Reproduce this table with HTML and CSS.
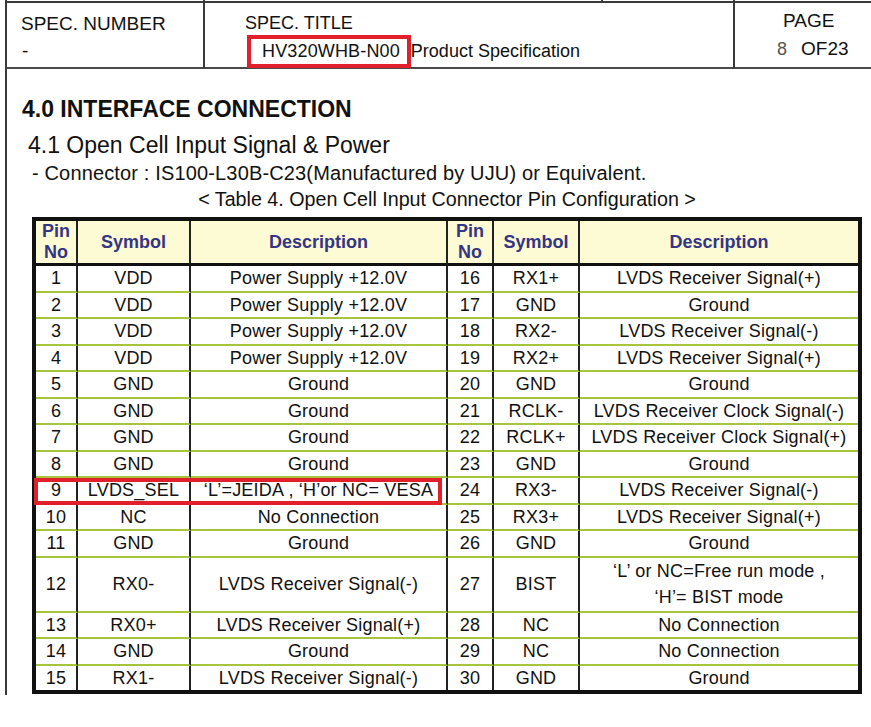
FILE: index.html
```html
<!DOCTYPE html>
<html>
<head>
<meta charset="utf-8">
<link rel="stylesheet" href="styles.css">
</head>
<body>
<div class="page">
  <div class="strip"><span></span><span></span><span></span><span></span></div>
  <header class="hdr">
    <div class="hc hc-num">
      <div class="num-lbl">SPEC. NUMBER</div>
      <div class="num-val">-</div>
    </div>
    <div class="hc hc-title">
      <div class="title-lbl">SPEC. TITLE</div>
      <div class="title-val"><span class="mark">HV320WHB-N00</span>Product Specification</div>
    </div>
    <div class="hc hc-page">
      <div class="page-lbl">PAGE</div>
      <div class="page-val"><span class="pno">8</span><span class="pof">OF23</span></div>
    </div>
  </header>
  <main class="content">
    <h1>4.0 INTERFACE CONNECTION</h1>
    <h2>4.1 Open Cell Input Signal &amp; Power</h2>
    <p class="conn">- Connector : IS100-L30B-C23(Manufactured by UJU) or Equivalent.</p>
    <p class="cap">&lt; Table 4. Open Cell Input Connector Pin Configuration &gt;</p>
    <div class="tblwrap">
      <table class="pins">
        <colgroup>
          <col class="c-pin1"><col class="c-sym1"><col class="c-desc1">
          <col class="c-pin2"><col class="c-sym2"><col class="c-desc2">
        </colgroup>
        <thead>
          <tr><th>Pin<br>No</th><th>Symbol</th><th>Description</th><th>Pin<br>No</th><th>Symbol</th><th>Description</th></tr>
        </thead>
        <tbody>
          <tr><td>1</td><td>VDD</td><td>Power Supply +12.0V</td><td>16</td><td>RX1+</td><td>LVDS Receiver Signal(+)</td></tr>
          <tr><td>2</td><td>VDD</td><td>Power Supply +12.0V</td><td>17</td><td>GND</td><td>Ground</td></tr>
          <tr><td>3</td><td>VDD</td><td>Power Supply +12.0V</td><td>18</td><td>RX2-</td><td>LVDS Receiver Signal(-)</td></tr>
          <tr><td>4</td><td>VDD</td><td>Power Supply +12.0V</td><td>19</td><td>RX2+</td><td>LVDS Receiver Signal(+)</td></tr>
          <tr><td>5</td><td>GND</td><td>Ground</td><td>20</td><td>GND</td><td>Ground</td></tr>
          <tr><td>6</td><td>GND</td><td>Ground</td><td>21</td><td>RCLK-</td><td>LVDS Receiver Clock Signal(-)</td></tr>
          <tr><td>7</td><td>GND</td><td>Ground</td><td>22</td><td>RCLK+</td><td>LVDS Receiver Clock Signal(+)</td></tr>
          <tr><td>8</td><td>GND</td><td>Ground</td><td>23</td><td>GND</td><td>Ground</td></tr>
          <tr><td>9</td><td>LVDS_SEL</td><td>‘L’=JEIDA , ‘H’or NC= VESA</td><td>24</td><td>RX3-</td><td>LVDS Receiver Signal(-)</td></tr>
          <tr><td>10</td><td>NC</td><td>No Connection</td><td>25</td><td>RX3+</td><td>LVDS Receiver Signal(+)</td></tr>
          <tr><td>11</td><td>GND</td><td>Ground</td><td>26</td><td>GND</td><td>Ground</td></tr>
          <tr class="dbl"><td>12</td><td>RX0-</td><td>LVDS Receiver Signal(-)</td><td>27</td><td>BIST</td><td class="two">‘L’ or NC=Free run mode ,<br>‘H’= BIST mode</td></tr>
          <tr><td>13</td><td>RX0+</td><td>LVDS Receiver Signal(+)</td><td>28</td><td>NC</td><td>No Connection</td></tr>
          <tr><td>14</td><td>GND</td><td>Ground</td><td>29</td><td>NC</td><td>No Connection</td></tr>
          <tr><td>15</td><td>RX1-</td><td>LVDS Receiver Signal(-)</td><td>30</td><td>GND</td><td>Ground</td></tr>
        </tbody>
      </table>
      <div class="rowmark"></div>
    </div>
  </main>
</div>
</body>
</html>
```
FILE: styles.css
```css
* { box-sizing: border-box; }
html, body { margin: 0; padding: 0; background: #fff; }
body {
  font-family: "Liberation Sans", Arial, sans-serif;
  color: #111;
  width: 871px;
  height: 727px;
  overflow: hidden;
}
.page {
  margin-left: 5px;
  border-left: 2px solid #3a3a3a;
  height: 695px;
}
.strip {
  display: grid;
  grid-template-columns: 198px 398px 132px 1fr;
  height: 1px;
}
.strip span { border-right: 2px solid #3a3a3a; }
.strip span:last-child { border-right: 0; }

.hdr {
  display: grid;
  grid-template-columns: 198px 530px 1fr;
  height: 68px;
  border-top: 2px solid #3a3a3a;
  border-bottom: 2px solid #4a4a4a;
}
.hc { border-right: 2px solid #3a3a3a; }
.hc-page { border-right: 0; }

.hc-num { padding: 9px 0 0 14px; }
.num-lbl, .num-val { font-size: 19px; line-height: 24px; }
.num-val { margin-top: 3px; padding-left: 1px; }

.hc-title { padding: 10px 0 0 40px; }
.title-lbl { font-size: 18px; line-height: 20px; }
.title-val { margin-top: 2px; padding-left: 2px; font-size: 18px; line-height: 18px; white-space: nowrap; }
.mark {
  display: inline-block;
  border: 4px solid #e2202b;
  line-height: 25px;
  padding: 0 7px 0 11px;
  letter-spacing: 0.15px;
}

.hc-page { padding: 7px 0 0 48px; }
.page-lbl { font-size: 19px; line-height: 22px; }
.page-val { margin: 6px 0 0 -6px; font-size: 19px; line-height: 22px; white-space: nowrap; }
.pno { font-size: 18px; color: #555; }
.pof { margin-left: 14px; }

.content { padding: 26px 0 0 15px; }
.content h1 {
  margin: 0;
  font-size: 23px;
  line-height: 28px;
  font-weight: bold;
}
.content h2 {
  margin: 8px 0 0 6px;
  font-size: 23px;
  line-height: 29px;
  font-weight: normal;
}
.conn {
  margin: 0 0 0 10px;
  font-size: 20px;
  line-height: 26px;
  letter-spacing: 0.15px;
}
.cap {
  margin: 0 0 0 10px;
  width: 830px;
  text-align: center;
  font-size: 19.7px;
  line-height: 26px;
}
.tblwrap {
  position: relative;
  margin: 5px 0 0 10px;
  width: 830px;
}
.pins {
  width: 830px;
  table-layout: fixed;
  border: 4px solid #111;
  border-spacing: 0;
  border-collapse: separate;
}
.c-pin1 { width: 42px; }
.c-sym1 { width: 113px; }
.c-desc1 { width: 257px; }
.c-pin2 { width: 46px; }
.c-sym2 { width: 86px; }
.c-desc2 { width: 278px; }

.pins th, .pins td {
  box-sizing: content-box;
  padding: 0;
  text-align: center;
  vertical-align: middle;
  border-right: 2px solid #222;
  white-space: nowrap;
}
.pins th:last-child, .pins td:last-child { border-right: 0; }
.pins th {
  background: #fdfbd3;
  color: #353585;
  font-weight: bold;
  font-size: 18px;
  line-height: 21px;
  height: 42px;
  border-bottom: 3px solid #111;
}
.pins td {
  font-size: 18px;
  letter-spacing: 0.2px;
  line-height: 20px;
  height: 24.5px;
  border-bottom: 2px solid #a6c53c;
}
.pins tr:last-child td { border-bottom: 0; }
.pins .dbl td { height: 51px; }
.pins td.two { line-height: 26.5px; }

.rowmark {
  position: absolute;
  left: 2px;
  top: 261px;
  width: 408px;
  height: 27px;
  border: 4px solid #e2202b;
}
```
